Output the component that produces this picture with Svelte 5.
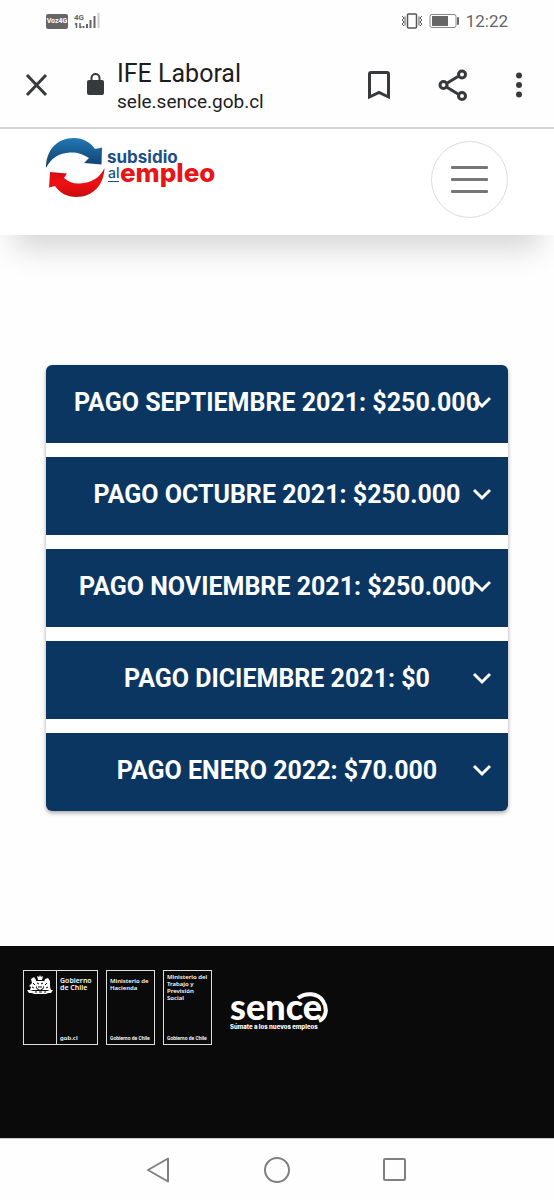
<script>
  const payments = [
    { month: "SEPTIEMBRE 2021", amount: "$250.000" },
    { month: "OCTUBRE 2021", amount: "$250.000" },
    { month: "NOVIEMBRE 2021", amount: "$250.000" },
    { month: "DICIEMBRE 2021", amount: "$0" },
    { month: "ENERO 2022", amount: "$70.000" },
  ];

  let selected = $state(-1);

  const toggle = (index) => {
    selected = selected === index ? -1 : index;
  };
</script>

<div class="screen">
  <div class="status-bar">
    <div class="status-group">
      <span class="volte">Voz4G</span>
      <svg width="27" height="18" viewBox="0 0 27 18" aria-hidden="true">
        <text class="network" x="0" y="8">4G</text>
        <path
          d="M2.5 16v-5M1 12.500l1.500-1.500M6 11v5M7.500 14.500L6 16"
          fill="none"
          stroke="#666"
          stroke-width="1.500"
        />
        <path
          d="M9.500 14v2M13 12v4M16.500 8v8M20.500 4v12"
          stroke="#666"
          stroke-width="2"
        />
        <path d="M24.500 1v15" stroke="#ccc" stroke-width="2" />
      </svg>
    </div>
    <div class="status-group">
      <svg width="22" height="18" viewBox="0 0 22 18" aria-hidden="true">
        <g fill="none" stroke="#555">
          <rect x="6.500" y="2" width="9" height="14" rx="1" stroke-width="1.500" />
          <path
            d="M1 4l2 2-2 2 2 2-2 2 2 2M4 4.500v9M21 4l-2 2 2 2-2 2 2 2-2 2M18 4.500v9"
            stroke-width="1"
          />
        </g>
      </svg>
      <svg width="31" height="16" viewBox="0 0 31 16" aria-hidden="true">
        <rect x="1" y="1.500" width="26" height="13" rx="2" fill="none" stroke="#888" />
        <rect x="3" y="3" width="16" height="10" fill="#666" />
        <rect x="28" y="4" width="2" height="8" rx="1" fill="#666" />
      </svg>
      <span class="clock">12:22</span>
    </div>
  </div>

  <div class="browser-bar">
    <button class="icon-btn" aria-label="Cerrar">
      <svg width="24" height="24" viewBox="0 0 24 24">
        <path d="M2 2l19 20M21 2L2 22" stroke="#37393b" stroke-width="3" />
      </svg>
    </button>
    <svg class="lock" width="18" height="24" viewBox="0 0 18 24" aria-hidden="true">
      <rect x="0" y="7" width="17" height="15" rx="2" fill="#37393b" />
      <path
        d="M4.500 8V5a4 4 0 0 1 8 0v3"
        fill="none"
        stroke="#37393b"
        stroke-width="2"
      />
    </svg>
    <div class="page-info">
      <div class="page-title">IFE Laboral</div>
      <div class="page-url">sele.sence.gob.cl</div>
    </div>
    <div class="browser-actions">
      <button class="icon-btn" aria-label="Guardar">
        <svg width="24" height="30" viewBox="0 0 24 30">
          <path
            d="M2.500 27V4a1.500 1.500 0 0 1 1.500-1.500h16A1.500 1.500 0 0 1 21.500 4v23L12 22.500z"
            fill="none"
            stroke="#37393b"
            stroke-width="3"
          />
        </svg>
      </button>
      <button class="icon-btn" aria-label="Compartir">
        <svg width="30" height="32" viewBox="0 0 30 32">
          <g fill="none" stroke="#37393b" stroke-width="3">
            <path d="M8.500 14.500L20 7.500M8.500 18L20 25" />
            <circle cx="5.500" cy="16" r="3.500" />
            <circle cx="24" cy="5.500" r="3.500" />
            <circle cx="24" cy="27" r="3.500" />
          </g>
        </svg>
      </button>
      <button class="icon-btn" aria-label="Más opciones">
        <svg width="8" height="28" viewBox="0 0 8 28" fill="#37393b">
          <circle cx="4" cy="4.500" r="3" />
          <circle cx="4" cy="14" r="3" />
          <circle cx="4" cy="23.500" r="3" />
        </svg>
      </button>
    </div>
  </div>

  <header class="site-header">
    <a class="logo" href="#inicio" aria-label="Subsidio al empleo">
      <svg width="172" height="60" viewBox="0 0 172 60">
        <defs>
          <linearGradient id="blue" x1="0" y1="0" x2="0" y2="1">
            <stop offset="0" stop-color="#2179b5" />
            <stop offset="1" stop-color="#123c6c" />
          </linearGradient>
          <linearGradient id="red" x1="0" y1="0" x2="0" y2="1">
            <stop offset="0" stop-color="#c90d10" />
            <stop offset="0.500" stop-color="#f01013" />
            <stop offset="1" stop-color="#c80c0f" />
          </linearGradient>
        </defs>
        <path
          d="M0 30C0 12 11 0 28 0C37 0 44 4 49 11L56 9.500L55.500 26.500L38 25L43 20C37 16 31 14 24 14.500C13 15 5 20 0 30z"
          fill="url(#blue)"
        />
        <path
          d="M58.500 30C58 46 48 59 30 59C21 59 14 55 9 48L3 49.500L4 34L21 35.500L18 40C23 44 28 46 34 45.500C45 45 54 40 58.500 30z"
          fill="url(#red)"
        />
        <text class="logo-top" x="61" y="25">subsidio</text>
        <text class="logo-al" x="62" y="40">al</text>
        <path d="M62 43.500h11" stroke="#1d4f86" stroke-width="1" />
        <text class="logo-main" x="74" y="44">empleo</text>
      </svg>
    </a>
    <button class="menu-btn" aria-label="Menú">
      <span></span>
      <span></span>
      <span></span>
    </button>
  </header>

  <main>
    <div class="accordion">
      {#each payments as payment, i}
        <button
          class="accordion-item"
          aria-expanded={selected === i}
          onclick={() => toggle(i)}
        >
          PAGO {payment.month}: {payment.amount}
          <svg
            class="chevron"
            class:open={selected === i}
            width="20"
            height="14"
            viewBox="0 0 20 14"
            aria-hidden="true"
          >
            <path d="M2 3l8 8 8-8" fill="none" stroke="#fff" stroke-width="3" />
          </svg>
        </button>
      {/each}
    </div>
  </main>

  <footer>
    <a class="gov-box gov-main" href="#gob">
      <span class="gov-shield">
        <svg width="26" height="20" viewBox="0 0 26 20" fill="#fff" aria-hidden="true">
          <path
            d="M10 1l2 1 1-2 1 2 2-1-1 4h-4zM9 6h8v4l-1 3-3 2-3-2-1-3zM4 4l3-2 2 3v8l2 2H3l1-3-2-1 3-3zM21 3l-3 1-1 3v6l-2 2h9l-1-3V6z"
          />
          <path d="M0 15h3l3 1h14l3-1h3l-2 3h-3l-2 1H7l-2-1H2z" />
          <path
            d="M10 8l2 1M14 9l2-1M11 12h4M6 8l2 2M20 8l-2 2M5 12l2 1M21 12l-2 1M8 17h2M12 17h3M17 17h2"
            stroke="#0a0a0a"
          />
        </svg>
      </span>
      <span class="gov-text">
        <strong>Gobierno de Chile</strong>
        <small>gob.cl</small>
      </span>
    </a>
    <a class="gov-box ministry" href="#hacienda">
      <strong class="lower">Ministerio de Hacienda</strong>
      <small>Gobierno de Chile</small>
    </a>
    <a class="gov-box ministry" href="#trabajo">
      <strong>Ministerio del Trabajo y Previsión Social</strong>
      <small>Gobierno de Chile</small>
    </a>
    <a class="sence" href="#sence">
      <span class="sence-name">sence</span>
      <span class="sence-claim">Súmate a los nuevos empleos</span>
      <svg class="sence-arc" width="36" height="36" viewBox="0 0 36 36" aria-hidden="true">
        <path
          d="M3 6C11 0 23 1 28 9C33 17 31 26 24 29"
          fill="none"
          stroke="#fff"
          stroke-width="4"
        />
      </svg>
    </a>
  </footer>

  <nav class="system-nav" aria-label="Sistema">
    <button class="icon-btn" aria-label="Atrás">
      <svg width="28" height="28" viewBox="0 0 28 28">
        <path d="M23 2.500v23L3 14z" />
      </svg>
    </button>
    <button class="icon-btn" aria-label="Inicio">
      <svg width="28" height="28" viewBox="0 0 28 28">
        <circle cx="14" cy="14" r="12" />
      </svg>
    </button>
    <button class="icon-btn" aria-label="Recientes">
      <svg width="28" height="28" viewBox="0 0 28 28">
        <rect x="3" y="3" width="21" height="21" rx="1" />
      </svg>
    </button>
  </nav>
</div>

<style>
  :global(body) {
    margin: 0;
    background: #fff;
  }

  .screen {
    display: flex;
    flex-direction: column;
    min-height: 100vh;
    background: #fefefe;
    font-family: Roboto, "Liberation Sans", sans-serif;
  }

  button {
    font-family: inherit;
    cursor: pointer;
  }

  svg {
    display: block;
    flex-shrink: 0;
  }

  .icon-btn {
    padding: 0;
    border: none;
    background: none;
  }

  .status-bar {
    display: flex;
    align-items: center;
    justify-content: space-between;
    height: 42px;
    padding: 0 46px;
    box-sizing: border-box;
  }

  .status-group {
    display: flex;
    align-items: center;
    gap: 6px;
  }

  .volte {
    width: 22px;
    border-radius: 2px;
    background: #666;
    color: #fff;
    font-size: 7px;
    font-weight: 700;
    line-height: 15px;
    text-align: center;
  }

  .network {
    fill: #666;
    font-size: 8px;
    font-weight: 700;
  }

  .clock {
    color: #666;
    font-size: 17px;
    line-height: 20px;
  }

  .browser-bar {
    display: flex;
    align-items: center;
    height: 87px;
    padding: 0 31px 0 25px;
    border-bottom: 2px solid #d4d4d4;
    box-sizing: border-box;
  }

  .lock {
    margin-left: 38px;
  }

  .page-info {
    margin-left: 12px;
    padding-top: 4px;
    color: #1c1d1f;
  }

  .page-title {
    font-size: 25px;
    line-height: 30px;
  }

  .page-url {
    font-size: 19px;
    line-height: 26px;
  }

  .browser-actions {
    display: flex;
    align-items: center;
    gap: 47px;
    margin-left: auto;
  }

  .site-header {
    position: relative;
    display: flex;
    align-items: flex-start;
    justify-content: space-between;
    padding: 9px 46px 17px;
    background: #fff;
    box-shadow: 0 28px 30px -14px rgba(0, 0, 0, 0.16);
  }

  .logo-top,
  .logo-al,
  .logo-main {
    font-family: Inter, "Open Sans", sans-serif;
  }

  .logo-top {
    fill: #1d4f86;
    font-size: 17px;
    font-weight: 700;
  }

  .logo-al {
    fill: #1d4f86;
    font-size: 14px;
    font-weight: 500;
  }

  .logo-main {
    fill: #e81518;
    font-size: 26px;
    font-weight: 800;
  }

  .menu-btn {
    display: flex;
    flex-direction: column;
    align-items: center;
    justify-content: center;
    gap: 9px;
    width: 77px;
    height: 77px;
    margin-top: 3px;
    padding: 0;
    border: 1px solid #dcdcdc;
    border-radius: 50%;
    background: #fff;
  }

  .menu-btn span {
    width: 37px;
    height: 3px;
    border-radius: 1px;
    background: #777;
  }

  main {
    flex: 1;
    padding: 130px 46px 134px;
  }

  .accordion {
    display: flex;
    flex-direction: column;
    gap: 14px;
    overflow: hidden;
    border-radius: 6px;
    background: #fff;
    box-shadow: 0 2px 4px rgba(0, 0, 0, 0.35);
  }

  .accordion-item {
    position: relative;
    padding: 23px 8px 25px;
    border: none;
    background: #0a3661;
    color: #fff;
    font-size: 25px;
    font-weight: 700;
    line-height: 30px;
    text-align: center;
    white-space: nowrap;
  }

  .chevron {
    position: absolute;
    top: 30px;
    right: 16px;
  }

  .chevron.open {
    transform: rotate(180deg);
  }

  footer {
    display: flex;
    align-items: flex-start;
    gap: 8px;
    padding: 24px 23px 93px;
    background: #0a0a0a;
  }

  footer a {
    color: #fff;
    text-decoration: none;
  }

  .gov-box {
    display: flex;
    height: 75px;
    border: 1px solid #ddd;
    box-sizing: border-box;
    font-family: "Noto Sans", "Open Sans", sans-serif;
  }

  .gov-box strong {
    font-weight: 600;
  }

  .gov-main {
    width: 75px;
  }

  .gov-shield {
    padding: 4px 3px;
    border-right: 1px solid #ddd;
  }

  .gov-text {
    display: flex;
    flex-direction: column;
    justify-content: space-between;
    padding: 6px 0 2px 3px;
    font-size: 7px;
    line-height: 7px;
  }

  .gov-text small {
    font-size: 6px;
    font-weight: 600;
    line-height: 8px;
  }

  .ministry {
    flex-direction: column;
    justify-content: space-between;
    width: 49px;
    padding: 3px 2px 2px 3px;
    font-size: 6px;
    line-height: 7px;
  }

  .ministry .lower {
    padding-top: 4px;
  }

  .ministry small {
    font-family: Roboto, sans-serif;
    font-size: 5px;
    font-weight: 600;
    line-height: 8px;
    white-space: nowrap;
  }

  .sence {
    position: relative;
    display: flex;
    flex-direction: column;
    margin: 19px 0 0 10px;
  }

  .sence-name {
    font-family: Lato, sans-serif;
    font-size: 36px;
    font-weight: 900;
    line-height: 34px;
  }

  .sence-claim {
    font-family: Inter, sans-serif;
    font-size: 6px;
    font-weight: 800;
    line-height: 8px;
  }

  .sence-arc {
    position: absolute;
    top: 3px;
    left: 65px;
  }

  .system-nav {
    display: flex;
    align-items: center;
    justify-content: center;
    gap: 90px;
    height: 62px;
    border-top: 1px solid #ccc;
    box-sizing: border-box;
  }

  .system-nav svg {
    fill: none;
    stroke: #808080;
    stroke-width: 2;
    stroke-linejoin: round;
  }
</style>
